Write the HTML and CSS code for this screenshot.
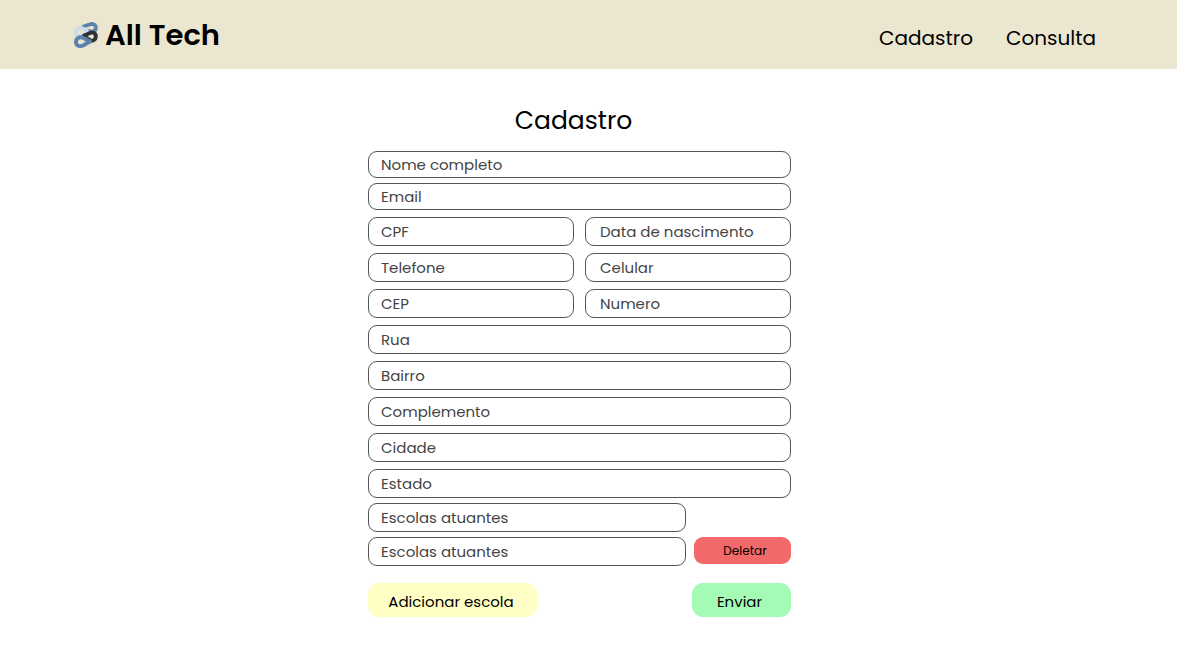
FILE: index.html
```html
<!DOCTYPE html>
<html lang="pt-BR">
<head>
<meta charset="utf-8">
<meta name="viewport" content="width=device-width, initial-scale=1">
<title>All Tech - Cadastro</title>
<link rel="stylesheet" href="styles.css">
</head>
<body>
<header class="topbar">
  <a class="brand" href="#">
    <svg class="brand-mark" viewBox="0 0 24 26" fill="none" stroke-width="3.900" stroke-linecap="round" stroke-linejoin="round" aria-hidden="true">
      <path stroke="#5b83aa" d="M9.500 4.500 15.500 2.500C19.500 1 22 3 21.800 6C21.500 9.300 18.500 10.300 15 8.800"/>
      <path stroke="#cddaea" d="M13 8.500 9 6.500C5 4.800 2 7 2 11C2 13 3 14.200 5 13.800L9 12.500"/>
      <path stroke="#2c3238" d="M10 13.500 16 11C19.500 9.800 22 11.500 21.800 14.800C21.500 18 19 19.500 16 18.200L11 15"/>
      <path stroke="#5b83aa" d="M16 19.500 9 15.800C5 14.300 2 16.500 2 20C2 23.500 5 25 9 23.500Z"/>
    </svg>
    <span>All Tech</span>
  </a>
  <nav class="menu">
    <a href="#cadastro">Cadastro</a>
    <a href="#consulta">Consulta</a>
  </nav>
</header>
<main class="page" id="cadastro">
  <form class="form">
    <h1 class="title">Cadastro</h1>
    <div class="group group-tight">
      <input class="field field-short" type="text" placeholder="Nome completo" aria-label="Nome completo">
      <input class="field field-short" type="email" placeholder="Email" aria-label="Email">
    </div>
    <div class="group">
      <div class="pair">
        <input class="field" type="text" placeholder="CPF" aria-label="CPF">
        <input class="field" type="text" placeholder="Data de nascimento" aria-label="Data de nascimento">
      </div>
      <div class="pair">
        <input class="field" type="tel" placeholder="Telefone" aria-label="Telefone">
        <input class="field" type="tel" placeholder="Celular" aria-label="Celular">
      </div>
      <div class="pair">
        <input class="field" type="text" placeholder="CEP" aria-label="CEP">
        <input class="field" type="text" placeholder="Numero" aria-label="Numero">
      </div>
      <input class="field" type="text" placeholder="Rua" aria-label="Rua">
      <input class="field" type="text" placeholder="Bairro" aria-label="Bairro">
      <input class="field" type="text" placeholder="Complemento" aria-label="Complemento">
      <input class="field" type="text" placeholder="Cidade" aria-label="Cidade">
      <input class="field" type="text" placeholder="Estado" aria-label="Estado">
    </div>
    <div class="group group-tight schools">
      <div class="school">
        <input class="field" type="text" placeholder="Escolas atuantes" aria-label="Escola atuante 1">
      </div>
      <div class="school">
        <input class="field" type="text" placeholder="Escolas atuantes" aria-label="Escola atuante 2">
        <button class="button button-delete" type="button">Deletar</button>
      </div>
    </div>
    <div class="actions">
      <button class="button button-add" type="button">Adicionar escola</button>
      <button class="button button-send" type="submit">Enviar</button>
    </div>
  </form>
</main>
</body>
</html>
```
FILE: styles.css
```css
* {
  box-sizing: border-box;
}

body {
  margin: 0;
  background: #fff;
  color: #000;
  font-family: Poppins, Inter, sans-serif;
}

.topbar {
  display: flex;
  align-items: center;
  justify-content: space-between;
  min-height: 69px;
  padding: 0 81px 0 74px;
  background: #ebe6d0;
}

.brand {
  display: flex;
  align-items: center;
  gap: 7px;
  color: inherit;
  font-size: 29px;
  font-weight: 600;
  line-height: 36px;
  text-decoration: none;
}

.brand-mark {
  width: 24px;
  height: 26px;
}

.menu {
  display: flex;
  gap: 33px;
  padding-top: 6px;
}

.menu a {
  color: inherit;
  font-size: 20px;
  line-height: 28px;
  text-decoration: none;
}

.page {
  display: flex;
  justify-content: center;
  padding: 34px 18px 46px 0;
}

.form {
  display: flex;
  flex-direction: column;
  gap: 7px;
  width: 100%;
  max-width: 423px;
}

.title {
  margin: 0 0 5px;
  padding-right: 12px;
  font-size: 25px;
  font-weight: 400;
  line-height: 36px;
  text-align: center;
}

.group {
  display: flex;
  flex-direction: column;
  gap: 7px;
}

.group-tight {
  gap: 5px;
}

.schools {
  margin-top: -2px;
}

.field {
  width: 100%;
  min-width: 0;
  height: 29px;
  padding: 0 12px;
  border: 1px solid #555;
  border-radius: 9px;
  background: #fff;
  color: #444;
  font: inherit;
  font-size: 15px;
}

.field-short {
  height: 27px;
}

.field::placeholder {
  color: #444;
  opacity: 1;
}

.pair {
  display: grid;
  grid-template-columns: 1fr 1fr;
  gap: 11px;
}

.pair .field + .field {
  padding-left: 14px;
}

.school {
  display: grid;
  grid-template-columns: 1fr 97px;
  align-items: start;
  gap: 8px;
}

.button {
  border: 0;
  border-radius: 11px;
  color: #000;
  font: inherit;
  font-size: 15px;
}

.button-delete {
  height: 27px;
  border-radius: 9px;
  background: #f26969;
  font-size: 12px;
  padding: 0 0 0 5px;
}

.actions {
  display: flex;
  justify-content: space-between;
  margin-top: 10px;
}

.button-add,
.button-send {
  height: 34px;
  padding: 2px 0 0;
}

.button-add {
  width: 169px;
  padding-right: 3px;
  background: #ffffc5;
}

.button-send {
  width: 99px;
  padding-right: 4px;
  background: #a4fbb5;
}
```
